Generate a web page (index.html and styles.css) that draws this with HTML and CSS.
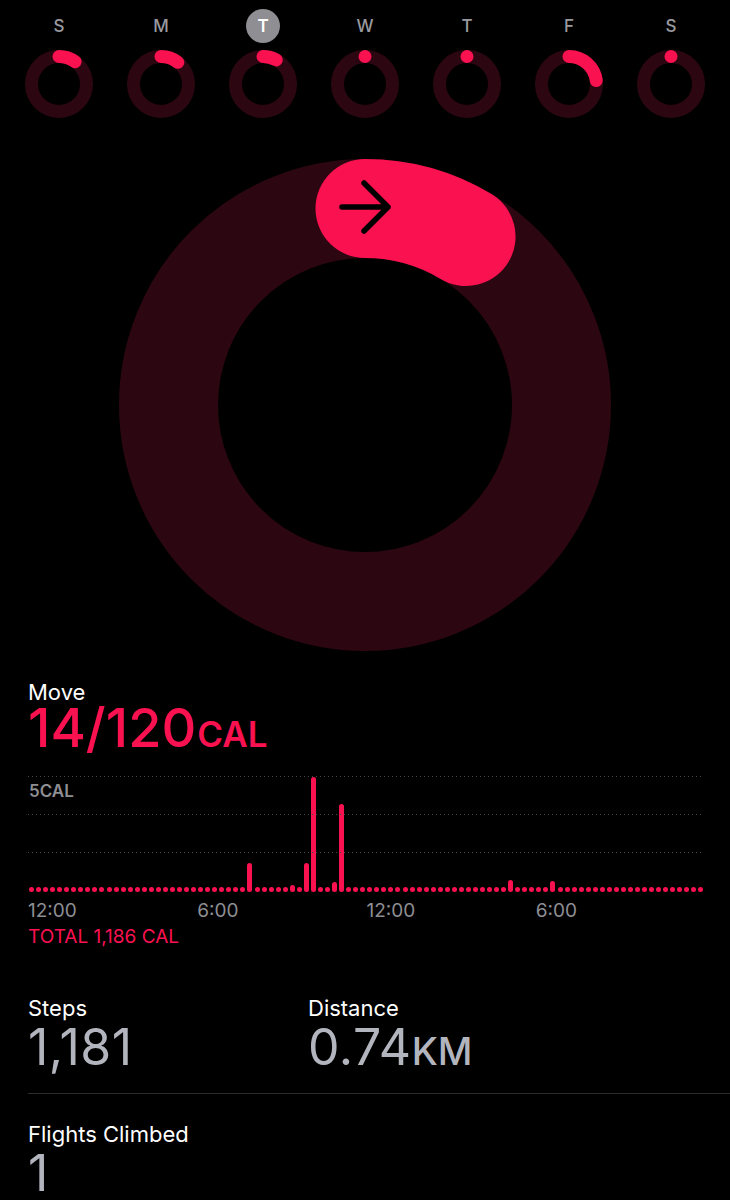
FILE: index.html
```html
<!DOCTYPE html>
<html lang="en">
<head>
    <meta charset="UTF-8">
    <title>Activity</title>

    <link rel="stylesheet" href="styles.css">
</head>
<body>

<section class="week">
    <div class="day">
        <span class="day_label">S</span>
        <svg class="day_ring" viewBox="0 0 70 70">
            <circle class="ring_track" cx="35" cy="35" r="27.5"/>
            <circle class="ring_fill" cx="35" cy="35" r="27.5" pathLength="100" stroke-dasharray="10 100" transform="rotate(-90 35 35)"/>
        </svg>
    </div>
    <div class="day">
        <span class="day_label">M</span>
        <svg class="day_ring" viewBox="0 0 70 70">
            <circle class="ring_track" cx="35" cy="35" r="27.5"/>
            <circle class="ring_fill" cx="35" cy="35" r="27.5" pathLength="100" stroke-dasharray="10.5 100" transform="rotate(-90 35 35)"/>
        </svg>
    </div>
    <div class="day">
        <span class="day_label day_label-active">T</span>
        <svg class="day_ring" viewBox="0 0 70 70">
            <circle class="ring_track" cx="35" cy="35" r="27.5"/>
            <circle class="ring_fill" cx="35" cy="35" r="27.5" pathLength="100" stroke-dasharray="8 100" transform="rotate(-90 35 35)"/>
        </svg>
    </div>
    <div class="day">
        <span class="day_label">W</span>
        <svg class="day_ring" viewBox="0 0 70 70">
            <circle class="ring_track" cx="35" cy="35" r="27.5"/>
            <circle class="ring_fill" cx="35" cy="35" r="27.5" pathLength="100" stroke-dasharray="0.01 100" transform="rotate(-90 35 35)"/>
        </svg>
    </div>
    <div class="day">
        <span class="day_label">T</span>
        <svg class="day_ring" viewBox="0 0 70 70">
            <circle class="ring_track" cx="35" cy="35" r="27.5"/>
            <circle class="ring_fill" cx="35" cy="35" r="27.5" pathLength="100" stroke-dasharray="0.01 100" transform="rotate(-90 35 35)"/>
        </svg>
    </div>
    <div class="day">
        <span class="day_label">F</span>
        <svg class="day_ring" viewBox="0 0 70 70">
            <circle class="ring_track" cx="35" cy="35" r="27.5"/>
            <circle class="ring_fill" cx="35" cy="35" r="27.5" pathLength="100" stroke-dasharray="23 100" transform="rotate(-90 35 35)"/>
        </svg>
    </div>
    <div class="day">
        <span class="day_label">S</span>
        <svg class="day_ring" viewBox="0 0 70 70">
            <circle class="ring_track" cx="35" cy="35" r="27.5"/>
            <circle class="ring_fill" cx="35" cy="35" r="27.5" pathLength="100" stroke-dasharray="0.01 100" transform="rotate(-90 35 35)"/>
        </svg>
    </div>
</section>

<section class="ring">
    <svg class="ring_big" viewBox="0 0 492 492">
        <circle class="ring_big_track" cx="246" cy="246" r="196.5"/>
        <circle class="ring_big_fill" cx="246" cy="246" r="196.5" pathLength="100" stroke-dasharray="8.6 100" transform="rotate(-90 246 246)"/>
        <path class="ring_arrow" d="M223 48 H269 M245 24 L269 48 L245 72"/>
    </svg>
</section>

<section class="move">
    <div class="move_title">Move</div>
    <div class="move_value">14/120<span class="move_unit">CAL</span></div>

    <div class="chart">
        <div class="chart_grid chart_grid-1"></div>
        <div class="chart_grid chart_grid-2"></div>
        <div class="chart_grid chart_grid-3"></div>
        <span class="chart_max">5CAL</span>
        <div class="chart_bars"></div>
    </div>

    <div class="chart_times">
        <span>12:00</span>
        <span>6:00</span>
        <span>12:00</span>
        <span>6:00</span>
    </div>
    <div class="chart_total">TOTAL 1,186 CAL</div>
</section>

<section class="stats">
    <div class="stats_row">
        <div class="stat">
            <div class="stat_title">Steps</div>
            <div class="stat_value">1,181</div>
        </div>
        <div class="stat">
            <div class="stat_title">Distance</div>
            <div class="stat_value">0.74<span class="stat_unit">KM</span></div>
        </div>
    </div>
    <div class="stats_row">
        <div class="stat">
            <div class="stat_title">Flights Climbed</div>
            <div class="stat_value">1</div>
        </div>
    </div>
</section>


<script>
// 15 minute buckets, 96 per day
const bars = document.querySelector('.chart_bars'),
	peaks = {31: 29, 37: 7, 39: 29, 40: 115, 43: 10, 44: 88, 68: 12, 74: 11};

for (let i = 0; i < 96; i++) {

	let slot = document.createElement('span'),
		bar = document.createElement('i');

	if (peaks[i]) {

		bar.style.height = peaks[i] + 'px';
	}

	slot.appendChild(bar);
	bars.appendChild(slot);
}
</script>

</body>
</html>
```

FILE: styles.css
```css
body {
    margin: 0;
    background: #000;
    color: #fff;
    font-family: "Inter", "Noto Sans", sans-serif;
    width: 730px;
    overflow: hidden;
}

/* week strip */

.week {
    display: flex;
    flex-flow: row nowrap;
    padding: 9px 8px 0;
}

.week .day {
    width: 102px;
    display: flex;
    flex-flow: column nowrap;
    align-items: center;
}

.week .day_label {
    width: 34px;
    height: 34px;
    border-radius: 50%;
    display: flex;
    align-items: center;
    justify-content: center;
    font-size: 17px;
    font-weight: 500;
    color: #9a9a9f;
}

.week .day_label-active {
    background-color: #8e8e93;
    color: #fff;
    font-weight: 600;
}

.week .day_ring {
    width: 70px;
    height: 70px;
    margin-top: 6px;
}

.ring_track {
    fill: none;
    stroke: #2c0711;
    stroke-width: 13;
}

.ring_fill {
    fill: none;
    stroke: #fa1150;
    stroke-width: 13;
    stroke-linecap: round;
}

/* big ring */

.ring {
    display: flex;
    justify-content: center;
    margin-top: 40px;
}

.ring .ring_big {
    width: 492px;
    height: 492px;
}

.ring_big_track {
    fill: none;
    stroke: #2c0711;
    stroke-width: 99;
}

.ring_big_fill {
    fill: none;
    stroke: #fa1150;
    stroke-width: 99;
    stroke-linecap: round;
}

.ring_arrow {
    fill: none;
    stroke: #000;
    stroke-width: 5.5;
    stroke-linecap: round;
    stroke-linejoin: round;
}

/* move */

.move {
    padding-left: 28px;
    margin-top: 29px;
}

.move .move_title {
    font-size: 22px;
    line-height: 24px;
}

.move .move_value {
    font-size: 54px;
    line-height: 48px;
    font-weight: 500;
    color: #fa1150;
}

.move .move_unit {
    font-size: 35px;
    line-height: 1;
    font-weight: 600;
    margin-left: 1px;
}

.chart {
    position: relative;
    width: 677px;
    height: 116px;
    margin-top: 24px;
}

.chart .chart_grid {
    position: absolute;
    left: 0;
    width: 674px;
    height: 1px;
    background-image: linear-gradient(to right, #48484a 1px, transparent 1px);
    background-size: 4px 1px;
}

.chart .chart_grid-1 {
    top: 0;
}

.chart .chart_grid-2 {
    top: 38px;
}

.chart .chart_grid-3 {
    top: 76px;
}

.chart .chart_max {
    position: absolute;
    top: 5px;
    left: 1px;
    font-size: 17px;
    line-height: 20px;
    font-weight: 600;
    color: #8e8e93;
}

.chart .chart_bars {
    height: 100%;
    display: flex;
    flex-flow: row nowrap;
    align-items: flex-end;
}

.chart .chart_bars span {
    flex: 1;
    display: flex;
    justify-content: center;
}

.chart .chart_bars i {
    width: 5px;
    height: 5px;
    border-radius: 2.5px;
    background-color: #fa1150;
}

.chart_times {
    width: 677px;
    display: grid;
    grid-template-columns: repeat(4, 1fr);
    margin-top: 7px;
    font-size: 19px;
    line-height: 24px;
    color: #8e8e93;
}

.chart_total {
    margin-top: 3px;
    font-size: 19px;
    line-height: 22px;
    color: #fa1150;
}

/* stats */

.stats {
    padding-left: 28px;
    margin-top: 47px;
}

.stats .stats_row {
    display: flex;
    flex-flow: row nowrap;
}

.stats .stats_row + .stats_row {
    border-top: 1px solid #2c2c2e;
    margin-top: 19px;
    padding-top: 27px;
}

.stats .stat {
    width: 280px;
}

.stats .stat_title {
    font-size: 22px;
    line-height: 26px;
}

.stats .stat_value {
    font-size: 50px;
    line-height: 53px;
    font-weight: 400;
    color: #b3b5be;
    letter-spacing: 0.5px;
}

.stats .stat_unit {
    font-size: 38px;
    line-height: 1;
    font-weight: 500;
    letter-spacing: 0;
}
```
